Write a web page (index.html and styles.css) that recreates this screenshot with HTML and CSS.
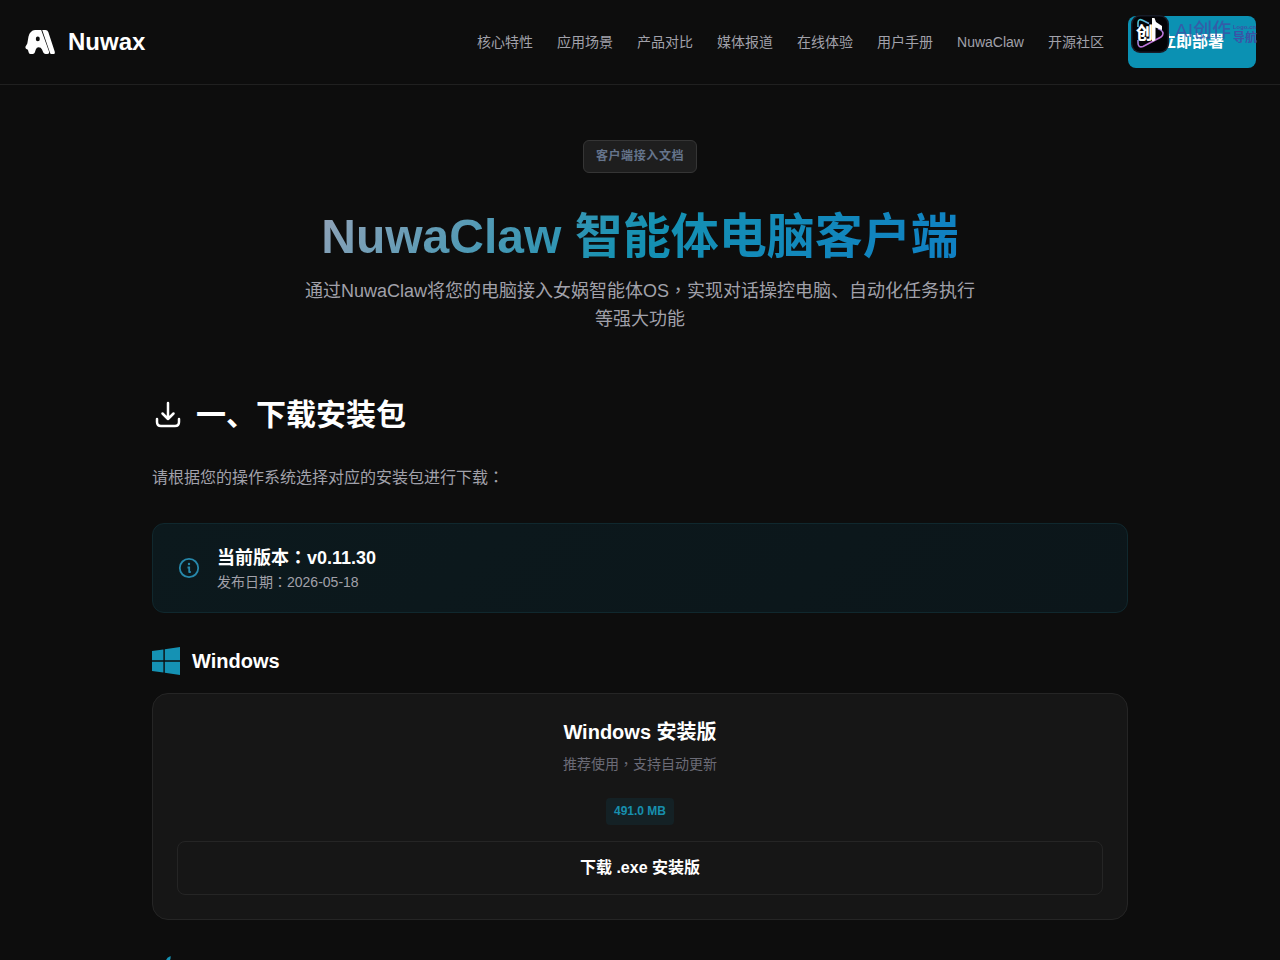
FILE: index.html
```html
<!DOCTYPE html>
<html lang="zh-CN">
<head>
<meta charset="utf-8">
<meta name="viewport" content="width=device-width, initial-scale=1">
<title>NuwaClaw 智能体电脑客户端</title>
<link rel="stylesheet" href="styles.css">
</head>
<body>
<div class="page">
  <header class="header">
    <a class="brand" href="#">
      <svg class="brand-logo" viewBox="0 0 32 32" aria-hidden="true">
        <path fill="#fff" fill-rule="evenodd" d="M11 4H17.200L25 25.500Q25.500 28 23.300 28H21.500Q19.800 28 19.300 26.600L18 23.500Q17 21.200 14.600 21.200Q12.600 21.200 11.800 23.500L10.800 26.600Q10.300 28 8.800 28H6.600Q5.200 28 4.700 26.500L3.900 23.800Q1.200 23.200 1.300 21L3.300 17.500L4.500 10.500Q6 4.500 11 4ZM13.800 10.600a2 2.300 0 1 0 0 4.600a2 2.300 0 1 0 0-4.600Z"/>
        <path fill="#fff" d="M18.200 4H21.500Q23.600 4 24.300 6L30.700 25.400Q31.400 28 29.200 28H27.200Q26.300 28 25.900 26.500Z"/>
      </svg>
      <span>Nuwax</span>
    </a>
    <nav class="nav">
      <a href="#">核心特性</a>
      <a href="#">应用场景</a>
      <a href="#">产品对比</a>
      <a href="#">媒体报道</a>
      <a href="#">在线体验</a>
      <a href="#">用户手册</a>
      <a href="#">NuwaClaw</a>
      <a href="#">开源社区</a>
      <div class="deploy">
        <button class="deploy-button" type="button">立即部署</button>
        <div class="mark">
          <svg class="mark-icon" viewBox="0 0 38 38" aria-hidden="true">
            <defs>
              <linearGradient id="ring" x1="0" y1="0" x2="0.6" y2="1">
                <stop offset="0" stop-color="#43cbd4"/>
                <stop offset="0.5" stop-color="#8f87dc"/>
                <stop offset="1" stop-color="#d46bd6"/>
              </linearGradient>
            </defs>
            <rect width="38" height="38" rx="9" fill="#171b27"/>
            <rect x="1.500" y="1.500" width="35" height="35" rx="8" fill="#030306"/>
            <path d="M7 12V8Q7 3 12 5.500L18 8.500M27 13.500L30 15Q34 18.500 30 22L12 31.500Q7 33 7 28V25" fill="none" stroke="url(#ring)" stroke-width="1.600"/>
            <path d="M21 3H23.500L25 7L31 11V15L24.500 12.500V24Q23.500 27 21 26Z" fill="#fff"/>
            <text x="5" y="24" class="mark-glyph">创</text>
          </svg>
          <span class="mark-name">AI创作</span>
          <span class="mark-side"><small>Logo.cn</small>导航</span>
        </div>
      </div>
    </nav>
  </header>

  <main class="main">
    <section class="hero">
      <span class="badge">客户端接入文档</span>
      <h1>NuwaClaw 智能体电脑客户端</h1>
      <p>通过NuwaClaw将您的电脑接入女娲智能体OS<span lang="zh-TW">，</span>实现对话操控电脑、自动化任务执行等强大功能</p>
    </section>

    <section class="download">
      <h2>
        <svg class="h2-icon" viewBox="0 0 32 32" aria-hidden="true" fill="none" stroke="#fff" stroke-width="2.500" stroke-linecap="round" stroke-linejoin="round">
          <path d="M16 4V20M10.500 14.500L16 20L21.500 14.500M5 20V23Q5 27 9 27H23Q27 27 27 23V20"/>
        </svg>
        <span>一、下载安装包</span>
      </h2>
      <p class="intro">请根据您的操作系统选择对应的安装包进行下载<span lang="zh-TW">：</span></p>

      <div class="version">
        <svg class="version-icon" viewBox="0 0 24 24" aria-hidden="true" fill="none" stroke="#2788ab" stroke-width="1.800">
          <circle cx="12" cy="12" r="9.200"/>
          <path d="M10.500 11.500H12.200V16M11.500 16H13.800"/>
          <circle cx="12" cy="8" r="1.200" fill="#2788ab" stroke="none"/>
        </svg>
        <div>
          <strong>当前版本<span lang="zh-TW">：</span>v0.11.30</strong>
          <p>发布日期<span lang="zh-TW">：</span>2026-05-18</p>
        </div>
      </div>

      <h3>
        <svg class="os-icon" viewBox="0 0 28 28" aria-label="Windows" fill="#1592b4">
          <path d="M0 4L11.400 2.400V13.300H0ZM12.800 2.200L28 0V13.300H12.800ZM0 14.700H11.400V25.600L0 24ZM12.800 14.700H28V28L12.800 25.800Z"/>
        </svg>
        <span>Windows</span>
      </h3>
      <article class="card">
        <h4>Windows 安装版</h4>
        <p>推荐使用<span lang="zh-TW">，</span>支持自动更新</p>
        <span class="size">491.0 MB</span>
        <button class="download-button" type="button">下载 .exe 安装版</button>
      </article>

      <h3>
        <svg class="os-icon" viewBox="0 0 28 28" aria-label="macOS" fill="#1592b4">
          <path d="M18.500 2Q19.500 7 14 9Q13 4 18.500 2ZM14 11Q17 8 21 9.500Q24 10.500 24 12Q18 17 25 21Q21 29 17 27Q14 25.500 11 27Q7 28 4 21Q2 11 8 9Q11 9 14 11Z"/>
        </svg>
      </h3>
    </section>
  </main>
</div>
</body>
</html>
```
FILE: styles.css
```css
* { box-sizing: border-box; }

body {
  margin: 0;
  background: #0d0d0d;
  color: #fff;
  font-family: "Liberation Sans", "Noto Sans CJK SC", sans-serif;
}

h1, h2, h3, h4, p { margin: 0; }
a { color: inherit; text-decoration: none; }
button { font-family: inherit; color: #fff; }
svg { display: block; flex-shrink: 0; }

/* Centred full-width punctuation */
:lang(zh-TW) { font-family: "Liberation Sans", "Noto Sans CJK TC", sans-serif; }

.page {
  display: flex;
  flex-direction: column;
  height: 100vh;
}

.header {
  display: flex;
  justify-content: space-between;
  align-items: center;
  padding: 16px 24px;
  border-bottom: 1px solid #202020;
}

.brand {
  display: flex;
  align-items: center;
  gap: 12px;
  font-size: 24px;
  line-height: 32px;
  font-weight: 700;
}
.brand-logo { width: 32px; height: 32px; }

.nav {
  display: flex;
  align-items: center;
  gap: 24px;
  font-size: 14px;
  line-height: 20px;
  color: #a1a1aa;
  white-space: nowrap;
}

.deploy { position: relative; }
.deploy-button {
  display: block;
  padding: 14px 32px;
  border: 0;
  border-radius: 8px;
  background: #0b91b3;
  font-size: 16px;
  line-height: 24px;
  font-weight: 700;
}

.mark {
  position: absolute;
  top: -1px;
  left: 3px;
  display: flex;
  align-items: center;
  color: #3d51a6;
  font-weight: 700;
  pointer-events: none;
}
.mark-icon { width: 38px; height: 38px; }
.mark-glyph { font-size: 17px; font-weight: 900; fill: #fff; }
.mark-name {
  margin-left: 6px;
  padding-bottom: 6px;
  font-size: 19px;
  line-height: 24px;
  font-weight: 500;
  opacity: 0.8;
}
.mark-side {
  display: flex;
  flex-direction: column;
  margin-left: 2px;
  font-size: 12px;
  line-height: 14px;
}
.mark-side small { font-size: 6px; line-height: 7px; }

.main {
  flex: 1;
  min-height: 0;
  overflow-y: auto;
  scrollbar-width: none;
  width: 100%;
  max-width: 1024px;
  margin: 0 auto;
  padding: 55px 24px 0;
}

.hero {
  display: flex;
  flex-direction: column;
  align-items: center;
  text-align: center;
}
.badge {
  padding: 7px 12px;
  border: 1px solid #353535;
  border-radius: 6px;
  background: #1e1e1e;
  color: #65748b;
  font-size: 12px;
  line-height: 17px;
  font-weight: 700;
  letter-spacing: 0.6px;
}
.hero h1 {
  margin-top: 32px;
  font-size: 48px;
  line-height: 64px;
  background: linear-gradient(135deg, #94a3b8 0%, #1591b2 50%, #0f7fc4 100%);
  background-clip: text;
  -webkit-background-clip: text;
  color: transparent;
}
.hero p {
  max-width: 672px;
  margin-top: 8px;
  font-size: 18px;
  line-height: 28px;
  color: #a1a1aa;
}

.download { margin-top: 64px; }
.download h2 {
  display: flex;
  align-items: center;
  gap: 12px;
  font-size: 30px;
  line-height: 36px;
}
.h2-icon { width: 32px; height: 32px; }
.intro {
  margin-top: 32px;
  font-size: 16px;
  line-height: 26px;
  color: #a1a1aa;
}

.version {
  display: flex;
  align-items: center;
  gap: 16px;
  margin: 32px 0;
  padding: 20px 24px;
  border: 1px solid #10282e;
  border-radius: 12px;
  background: linear-gradient(135deg, #0c191d, #0c161a);
}
.version-icon { width: 24px; height: 24px; }
.version strong {
  display: block;
  font-size: 18px;
  line-height: 28px;
}
.version p {
  font-size: 14px;
  line-height: 20px;
  color: #a1a1aa;
}

.download h3 {
  display: flex;
  align-items: center;
  gap: 12px;
  font-size: 20px;
  line-height: 32px;
  min-height: 32px;
}
.os-icon { width: 28px; height: 28px; }

.card {
  display: flex;
  flex-direction: column;
  align-items: center;
  margin: 16px 0 32px;
  padding: 24px;
  border: 1px solid #252525;
  border-radius: 16px;
  background: #161616;
}
.card h4 { font-size: 20px; line-height: 28px; }
.card p {
  margin-top: 8px;
  font-size: 14px;
  line-height: 20px;
  color: #6b6b76;
}
.size {
  margin: 24px 0 16px;
  padding: 4px 8px;
  border-radius: 4px;
  background: #142125;
  color: #178fae;
  font-size: 12px;
  line-height: 19px;
  font-weight: 700;
}
.download-button {
  width: 100%;
  padding: 14px 24px;
  border: 1px solid #252525;
  border-radius: 8px;
  background: transparent;
  font-size: 16px;
  line-height: 24px;
  font-weight: 700;
}
```
